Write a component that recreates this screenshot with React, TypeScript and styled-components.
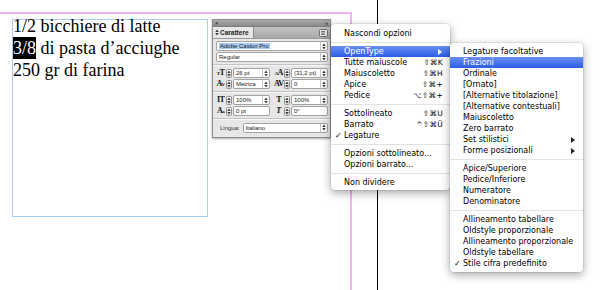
import React from "react";
import styled, { createGlobalStyle, css } from "styled-components";

const GlobalStyle = createGlobalStyle`
  html, body { margin: 0; padding: 0; background: #fff; }
  body { overflow: hidden; }
`;

const Canvas = styled.div`
  position: relative;
  width: 600px;
  height: 290px;
  overflow: hidden;
  background: #fff;
`;

/* ---------- document guides ---------- */
const MarginTop = styled.div`
  position: absolute;
  left: 0;
  top: 12px;
  width: 352px;
  height: 2px;
  background: #f4b2f2;
`;
const MarginRight = styled.div`
  position: absolute;
  left: 350px;
  top: 12px;
  bottom: 0;
  width: 2px;
  background: #f4b2f2;
`;
const PageEdge = styled.div`
  position: absolute;
  left: 377px;
  top: 0;
  bottom: 0;
  width: 1px;
  background: #000;
`;

/* ---------- text frame ---------- */
const TextFrame = styled.div`
  position: absolute;
  left: 12px;
  top: 19px;
  width: 194px;
  height: 196px;
  border: 1px solid #a9cbf8;
`;
const Story = styled.div`
  margin-top: -5px;
  font-family: "Liberation Serif", "DejaVu Serif", serif;
  font-size: 18px;
  line-height: 22px;
  color: #000;
  white-space: nowrap;
`;
const StoryLine = styled.div``;
const Selected = styled.span`
  display: inline-block;
  height: 22px;
  background: #000;
  color: #fff;
`;

/* ---------- character panel ---------- */
const Panel = styled.div`
  position: absolute;
  left: 212px;
  top: 19px;
  width: 119px;
  height: 119px;
  box-sizing: border-box;
  border: 1px solid #8c8c8c;
  background: #e7e7e7;
  display: flex;
  flex-direction: column;
  font-family: "Liberation Sans", Arial, sans-serif;
  font-size: 6px;
  color: #1a1a1a;
  box-shadow: 0 1px 2px rgba(0, 0, 0, 0.35);
`;
const TitleBar = styled.div`
  height: 6px;
  background: linear-gradient(#a9a9a9, #8b8b8b);
  display: flex;
  align-items: center;
  justify-content: space-between;
  padding: 0 2px;
  color: #2a2a2a;
  font-size: 6px;
  line-height: 6px;
`;
const TabRow = styled.div`
  height: 11px;
  display: flex;
  background: linear-gradient(#c2c2c2, #a9a9a9);
  border-top: 1px solid #7d7d7d;
  border-bottom: 1px solid #9a9a9a;
`;
const Tab = styled.div`
  display: flex;
  align-items: center;
  gap: 1px;
  padding: 0 4px 0 2px;
  background: #e7e7e7;
  border-right: 1px solid #8c8c8c;
  font-weight: bold;
  font-size: 6.5px;
`;
const TabFill = styled.div`
  flex: 1;
  display: flex;
  align-items: center;
  justify-content: flex-end;
  padding-right: 2px;
`;
const Body = styled.div`
  flex: 1;
  display: flex;
  flex-direction: column;
  gap: 1px;
  padding: 2px 2px 0 3px;
`;
const Field = styled.div`
  height: 10px;
  box-sizing: border-box;
  background: #fff;
  border: 1px solid #a3a3a3;
  border-radius: 2px;
  display: flex;
  align-items: center;
  padding-left: 2px;
  flex: 1;
  min-width: 0;
  white-space: nowrap;
  overflow: hidden;
`;
const Highlight = styled.span`
  background: #a8c9f3;
  padding: 0 1px;
`;
const DropBtn = styled.span`
  margin-left: auto;
  width: 6px;
  height: 8px;
  box-sizing: border-box;
  border-left: 1px solid #c8c8c8;
  display: flex;
  align-items: center;
  justify-content: center;
  flex: none;
  margin-right: 1px;
`;
const Stepper = styled.span`
  width: 6px;
  height: 9px;
  box-sizing: border-box;
  border: 1px solid #8f8f8f;
  border-radius: 1.5px;
  background: linear-gradient(#ffffff, #dcdcdc);
  display: flex;
  align-items: center;
  justify-content: center;
  flex: none;
`;
const Divider = styled.div`
  height: 0;
  border-top: 1px solid #c3c3c3;
  border-bottom: 1px solid #f7f7f7;
  margin: 1px -2px 1px -3px;
`;
const ControlRow = styled.div`
  display: flex;
  gap: 4px;
  height: 10px;
`;
const Cell = styled.div`
  flex: 1;
  display: flex;
  align-items: center;
  gap: 1px;
  min-width: 0;
`;
const GlyphIcon = styled.span<{ $italic?: boolean }>`
  width: 9px;
  flex: none;
  font-family: "Liberation Serif", "DejaVu Serif", serif;
  font-weight: bold;
  font-size: 8px;
  line-height: 8px;
  letter-spacing: -0.6px;
  text-align: center;
  color: #111;
  ${(p) =>
    p.$italic &&
    css`
      font-style: italic;
    `}
`;
const SmallGlyph = styled.span`
  font-size: 5px;
`;
const LangRow = styled.div`
  display: flex;
  align-items: center;
  gap: 3px;
  height: 11px;
  padding-left: 4px;
`;
const LangLabel = styled.span`
  font-size: 6px;
  color: #333;
`;

const Arrows = () => (
  <svg width="4" height="7" viewBox="0 0 4 7">
    <path d="M2 0.4 L3.7 2.9 H0.3Z M2 6.6 L3.7 4.1 H0.3Z" fill="#3a3a3a" />
  </svg>
);

const PanelMenuIcon = () => (
  <svg width="9" height="8" viewBox="0 0 9 8">
    <rect x="0.5" y="0.5" width="8" height="7" rx="1" fill="#e9e9e9" stroke="#6d6d6d" />
    <path d="M2 2.5 H6 M2 4 H6 M2 5.5 H6" stroke="#555" strokeWidth="0.8" />
  </svg>
);

type Ctl = { icon: React.ReactNode; italic?: boolean; value: string; drop?: boolean };

const controlRows: [Ctl, Ctl][][] = [
  [
    [
      { icon: <><SmallGlyph>T</SmallGlyph>T</>, value: "26 pt", drop: true },
      { icon: <><SmallGlyph>A</SmallGlyph>A</>, value: "(31,2 pt)", drop: true },
    ],
    [
      { icon: <>A<SmallGlyph>V</SmallGlyph></>, value: "Metrica", drop: true },
      { icon: "AV", value: "0", drop: true },
    ],
  ],
  [
    [
      { icon: "IT", value: "100%", drop: true },
      { icon: "T", value: "100%", drop: true },
    ],
    [
      { icon: <>A<SmallGlyph>a</SmallGlyph></>, value: "0 pt" },
      { icon: "T", italic: true, value: "0°" },
    ],
  ],
];

const ControlCell = ({ c }: { c: Ctl }) => (
  <Cell>
    <GlyphIcon $italic={c.italic}>{c.icon}</GlyphIcon>
    <Stepper>
      <Arrows />
    </Stepper>
    <Field>
      {c.value}
      {c.drop && (
        <DropBtn>
          <Arrows />
        </DropBtn>
      )}
    </Field>
  </Cell>
);

const CharacterPanel = () => (
  <Panel>
    <TitleBar>
      <span>×</span>
      <span>»</span>
    </TitleBar>
    <TabRow>
      <Tab>
        <Arrows />
        Carattere
      </Tab>
      <TabFill>
        <PanelMenuIcon />
      </TabFill>
    </TabRow>
    <Body>
      <ControlRow>
        <Field>
          <Highlight>Adobe Caslon Pro</Highlight>
          <DropBtn>
            <Arrows />
          </DropBtn>
        </Field>
      </ControlRow>
      <ControlRow>
        <Field>
          Regular
          <DropBtn>
            <Arrows />
          </DropBtn>
        </Field>
      </ControlRow>
      {controlRows.map((group, gi) => (
        <React.Fragment key={gi}>
          <Divider />
          {group.map((row, ri) => (
            <ControlRow key={ri}>
              <ControlCell c={row[0]} />
              <ControlCell c={row[1]} />
            </ControlRow>
          ))}
        </React.Fragment>
      ))}
      <Divider />
      <LangRow>
        <LangLabel>Lingua:</LangLabel>
        <Field>
          Italiano
          <DropBtn>
            <Arrows />
          </DropBtn>
        </Field>
      </LangRow>
    </Body>
  </Panel>
);

/* ---------- menus ---------- */
const Menu = styled.div<{ $left: number; $top: number; $width: number; $padTop: number; $padBottom: number }>`
  position: absolute;
  left: ${(p) => p.$left}px;
  top: ${(p) => p.$top}px;
  width: ${(p) => p.$width}px;
  padding: ${(p) => p.$padTop}px 0 ${(p) => p.$padBottom}px;
  background: #fff;
  border-radius: 4px;
  box-shadow: 0 3px 10px rgba(0, 0, 0, 0.35), 0 0 0 1px rgba(0, 0, 0, 0.07);
  font-family: "DejaVu Sans", "Liberation Sans", sans-serif;
  font-size: 8px;
  color: #000;
`;
const Item = styled.div<{ $active?: boolean }>`
  height: 11px;
  display: flex;
  align-items: center;
  padding: 0 7px 0 4px;
  white-space: nowrap;
  ${(p) =>
    p.$active &&
    css`
      background: linear-gradient(#6a8ff3, #2c5de7);
      color: #fff;
    `}
`;
const Gutter = styled.span`
  width: 9px;
  flex: none;
  font-size: 8px;
`;
const Shortcut = styled.span`
  margin-left: auto;
  font-size: 7.5px;
  letter-spacing: 0.3px;
`;
const SubArrow = styled.span`
  margin-left: auto;
  display: flex;
  align-items: center;
  margin-right: 1px;
`;
const MenuSep = styled.div`
  height: 7px;
  display: flex;
  align-items: center;
  &::after {
    content: "";
    flex: 1;
    height: 1px;
    background: #e3e3e3;
  }
`;

type Entry = "sep" | { label: string; sc?: string; sub?: boolean; active?: boolean; checked?: boolean };

const mainItems: Entry[] = [
  { label: "Nascondi opzioni" },
  "sep",
  { label: "OpenType", sub: true, active: true },
  { label: "Tutte maiuscole", sc: "⇧⌘K" },
  { label: "Maiuscoletto", sc: "⇧⌘H" },
  { label: "Apice", sc: "⇧⌘+" },
  { label: "Pedice", sc: "⌥⇧⌘+" },
  "sep",
  { label: "Sottolineato", sc: "⇧⌘U" },
  { label: "Barrato", sc: "^⇧⌘Ü" },
  { label: "Legature", checked: true },
  "sep",
  { label: "Opzioni sottolineato..." },
  { label: "Opzioni barrato..." },
  "sep",
  { label: "Non dividere" },
];

const subItems: Entry[] = [
  { label: "Legature facoltative" },
  { label: "Frazioni", active: true },
  { label: "Ordinale" },
  { label: "[Ornato]" },
  { label: "[Alternative titolazione]" },
  { label: "[Alternative contestuali]" },
  { label: "Maiuscoletto" },
  { label: "Zero barrato" },
  { label: "Set stilistici", sub: true },
  { label: "Forme posizionali", sub: true },
  "sep",
  { label: "Apice/Superiore" },
  { label: "Pedice/Inferiore" },
  { label: "Numeratore" },
  { label: "Denominatore" },
  "sep",
  { label: "Allineamento tabellare" },
  { label: "Oldstyle proporzionale" },
  { label: "Allineamento proporzionale" },
  { label: "Oldstyle tabellare" },
  { label: "Stile cifra predefinito", checked: true },
];

const Triangle = ({ color }: { color: string }) => (
  <svg width="4" height="6" viewBox="0 0 4 6">
    <path d="M0 0 L4 3 L0 6Z" fill={color} />
  </svg>
);

const MenuItems = ({ items }: { items: Entry[] }) => (
  <>
    {items.map((e, i) =>
      e === "sep" ? (
        <MenuSep key={i} />
      ) : (
        <Item key={i} $active={e.active}>
          <Gutter>{e.checked ? "✓" : ""}</Gutter>
          <span>{e.label}</span>
          {e.sc && <Shortcut>{e.sc}</Shortcut>}
          {e.sub && (
            <SubArrow>
              <Triangle color={e.active ? "#fff" : "#222"} />
            </SubArrow>
          )}
        </Item>
      )
    )}
  </>
);

export default function App() {
  return (
    <>
      <GlobalStyle />
      <Canvas>
        <MarginTop />
        <MarginRight />
        <PageEdge />
        <TextFrame>
          <Story>
            <StoryLine>1/2 bicchiere di latte</StoryLine>
            <StoryLine>
              <Selected>3/8</Selected> di pasta d’acciughe
            </StoryLine>
            <StoryLine>250 gr di farina</StoryLine>
          </Story>
        </TextFrame>
        <CharacterPanel />
        <Menu $left={331} $top={24} $width={119} $padTop={4} $padBottom={2}>
          <MenuItems items={mainItems} />
        </Menu>
        <Menu $left={450} $top={43} $width={133} $padTop={3} $padBottom={3}>
          <MenuItems items={subItems} />
        </Menu>
      </Canvas>
    </>
  );
}
